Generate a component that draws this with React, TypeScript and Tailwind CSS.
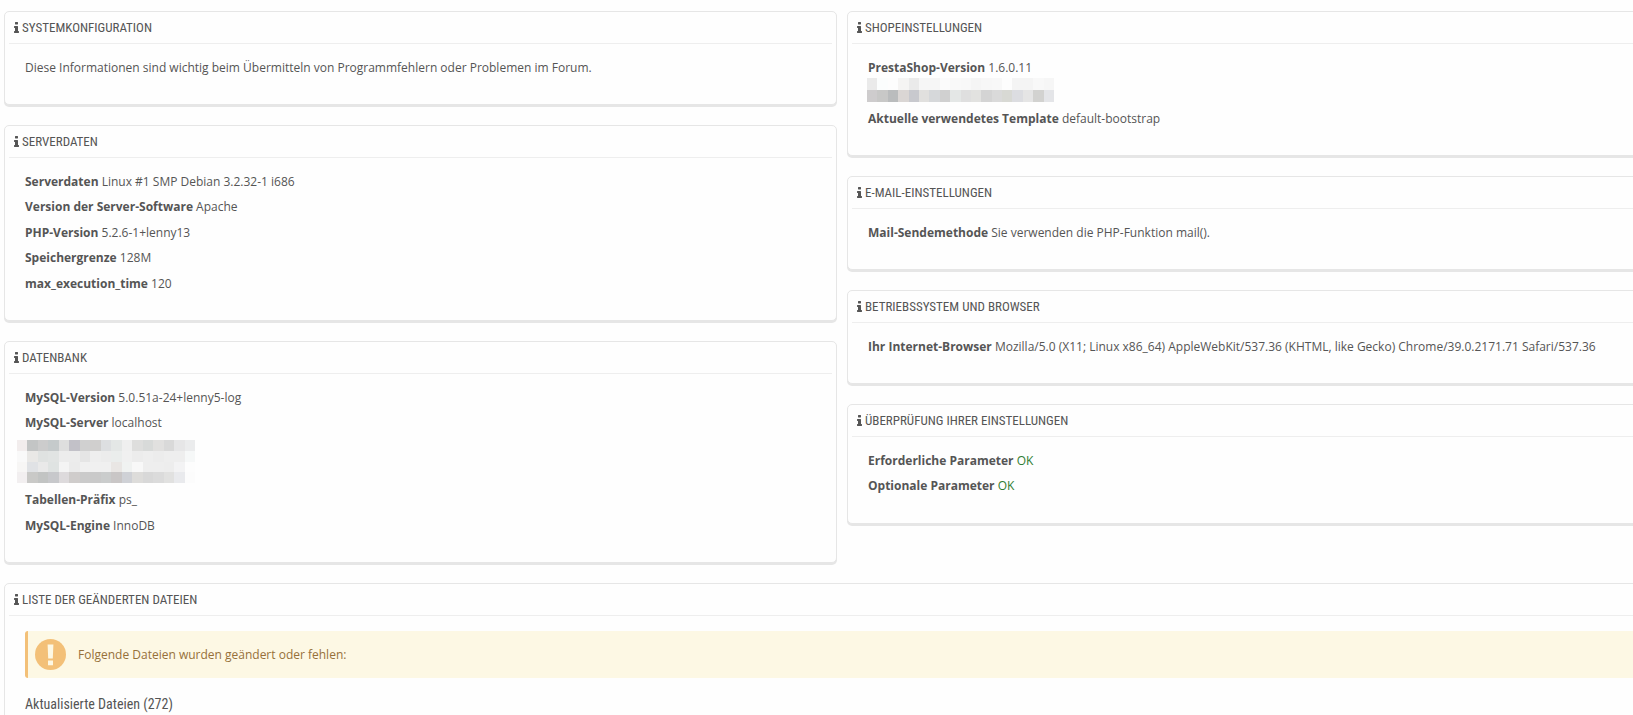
import type { ReactNode } from "react";

function InfoIcon() {
  return (
    <svg
      viewBox="0 128 640 1408"
      className="h-[11px] w-[5px] shrink-0 fill-current"
      aria-hidden="true"
    >
      <path d="M640 1344v128q0 26-19 45t-45 19h-512q-26 0-45-19t-19-45v-128q0-26 19-45t45-19h64v-384h-64q-26 0-45-19t-19-45v-128q0-26 19-45t45-19h384q26 0 45 19t19 45v576h64q26 0 45 19t19 45zM512 192v192q0 26-19 45t-45 19h-256q-26 0-45-19t-19-45v-192q0-26 19-45t45-19h256q26 0 45 19t19 45z" />
    </svg>
  );
}

function WarningIcon() {
  return (
    <svg viewBox="0 0 31 31" className="size-[31px] shrink-0" aria-hidden="true">
      <circle cx="15.5" cy="15.5" r="15.5" fill="#f3c078" />
      <path
        d="M12.6 5.4h5.8l-.6 14.2h-4.6zM13 21.4h5v4.8h-5z"
        fill="#fdf8e4"
      />
    </svg>
  );
}

function Panel({ title, children }: { title: string; children: ReactNode }) {
  return (
    <section className="mb-5 rounded-[5px] border border-[#e6e6e6] bg-[#fefefe] px-5 pb-5 shadow-[0_2px_0_#e6e6e6]">
      <h3 className="-mx-4 mb-[15px] flex h-8 items-center gap-[3px] border-b border-[#eee] pb-px pl-[5px] font-['Ubuntu_Condensed','Roboto_Condensed',Roboto,sans-serif] text-[13px] uppercase">
        <InfoIcon />
        {title}
      </h3>
      {children}
    </section>
  );
}

function Row({ label, children }: { label: string; children: ReactNode }) {
  return (
    <p className="mb-2 odd:mb-[9px]">
      <strong className="font-bold">{label}</strong> {children}
    </p>
  );
}

// hidden values are shown as a coarse pixel pattern
function Mosaic({ rows, className }: { rows: string[]; className: string }) {
  const cells = rows.map((row) => row.split(" "));
  return (
    <svg
      viewBox={`0 0 ${cells[0].length} ${cells.length}`}
      preserveAspectRatio="none"
      shapeRendering="crispEdges"
      className={className}
      aria-hidden="true"
    >
      {cells.map((row, y) =>
        row.map((color, x) => (
          <rect
            key={`${x}-${y}`}
            x={x}
            y={y}
            width="1"
            height="1"
            fill={`#${color}`}
          />
        ))
      )}
    </svg>
  );
}

const databaseMosaic = [
  "f2eded c3c5c5 cccccc c5cacb dedede c2c1c8 d0d0d0 d0cfce dddfe1 e4e7e6 efefef dededd d8dad9 e1e0df d9d9d9 e6e6e7 ebeced",
  "f9f9f9 e9e8e6 dfe2e1 e1e4e3 ececec ececec e5e5e5 eeeeee ececec eaedec f0f0f0 ececec eeeeee ececec eeeeee eeeeee f6f8f8",
  "f7f6f5 e0e2e5 e9e9e9 dfe3e2 f4f4f4 ebebeb f0f0f0 f0f0f0 f0f0f0 e9e6e4 f0f2f1 f8f8f8 eeeeee eeeeee ededed f3f3f4 fdfdfd",
  "f2eff0 c9c9c7 c2c4c3 c7c8cb dddadc cfcccb cacaca c9c9c9 cacccc c9c6c6 cfd1d6 dddcda d8d8d8 dbdbdb e1e1e0 e9eaed fcfcfc",
];

const shopMosaic = [
  "eaeaea fbfdfd fdfdfd f5f4f3 eaeaea f6f6f6 f6f6f6 fbfbfb f9f9f9 f8f8f8 f5f5f5 f7f7f7 f8f8f8 fdfdfd f4f4f4 f4f4f4 f8f8f8 f6f6f6",
  "cecccd c8c8c7 babcbd dad6d4 c8c9ce e1e0de d6d8da d0d0d0 e4e7e6 dfdfdf e2e2e0 d4d4d4 dadada d8d9d4 dcdde1 e5e5e5 d2d2d0 e4e5e8",
];

export default function App() {
  return (
    <div className="h-screen overflow-hidden bg-[#fefefe] font-['Open_Sans',sans-serif] text-xs leading-[17px] text-[#555]">
      <main className="-mr-[47px] ml-1 pt-[11px]">
        <div className="grid grid-cols-2 gap-[10px]">
          <div>
            <Panel title="Systemkonfiguration">
              <p className="mb-2">
                Diese Informationen sind wichtig beim Übermitteln von
                Programmfehlern oder Problemen im Forum.
              </p>
            </Panel>
            <Panel title="Serverdaten">
              <Row label="Serverdaten">Linux #1 SMP Debian 3.2.32-1 i686</Row>
              <Row label="Version der Server-Software">Apache</Row>
              <Row label="PHP-Version">5.2.6-1+lenny13</Row>
              <Row label="Speichergrenze">128M</Row>
              <Row label="max_execution_time">120</Row>
            </Panel>
            <Panel title="Datenbank">
              <Row label="MySQL-Version">5.0.51a-24+lenny5-log</Row>
              <Row label="MySQL-Server">localhost</Row>
              <Mosaic
                rows={databaseMosaic}
                className="mb-2 -ml-2 h-[43px] w-[178px]"
              />
              <Row label="Tabellen-Präfix">ps_</Row>
              <Row label="MySQL-Engine">InnoDB</Row>
            </Panel>
          </div>
          <div>
            <Panel title="Shopeinstellungen">
              <Row label="PrestaShop-Version">1.6.0.11</Row>
              <Mosaic
                rows={shopMosaic}
                className="-mt-1.5 mb-2 -ml-px h-6 w-[187px]"
              />
              <Row label="Aktuelle verwendetes Template">default-bootstrap</Row>
            </Panel>
            <Panel title="E-Mail-Einstellungen">
              <Row label="Mail-Sendemethode">
                Sie verwenden die PHP-Funktion mail().
              </Row>
            </Panel>
            <Panel title="Betriebssystem und Browser">
              <Row label="Ihr Internet-Browser">
                Mozilla/5.0 (X11; Linux x86_64) AppleWebKit/537.36 (KHTML, like
                Gecko) Chrome/39.0.2171.71 Safari/537.36
              </Row>
            </Panel>
            <Panel title="Überprüfung Ihrer Einstellungen">
              <Row label="Erforderliche Parameter">
                <span className="text-[#2f7d32]">OK</span>
              </Row>
              <Row label="Optionale Parameter">
                <span className="text-[#2f7d32]">OK</span>
              </Row>
            </Panel>
          </div>
        </div>
        <Panel title="Liste der geänderten Dateien">
          <div
            role="alert"
            className="mb-4 flex h-[47px] items-center gap-3 rounded-[3px] border-l-3 border-[#f3c078] bg-[#fdf8e4] pl-[7px] text-[#96703a]"
          >
            <WarningIcon />
            Folgende Dateien wurden geändert oder fehlen:
          </div>
          <h4 className="font-['Ubuntu_Condensed','Roboto_Condensed',Roboto,sans-serif] text-sm">
            Aktualisierte Dateien (272)
          </h4>
        </Panel>
      </main>
    </div>
  );
}
